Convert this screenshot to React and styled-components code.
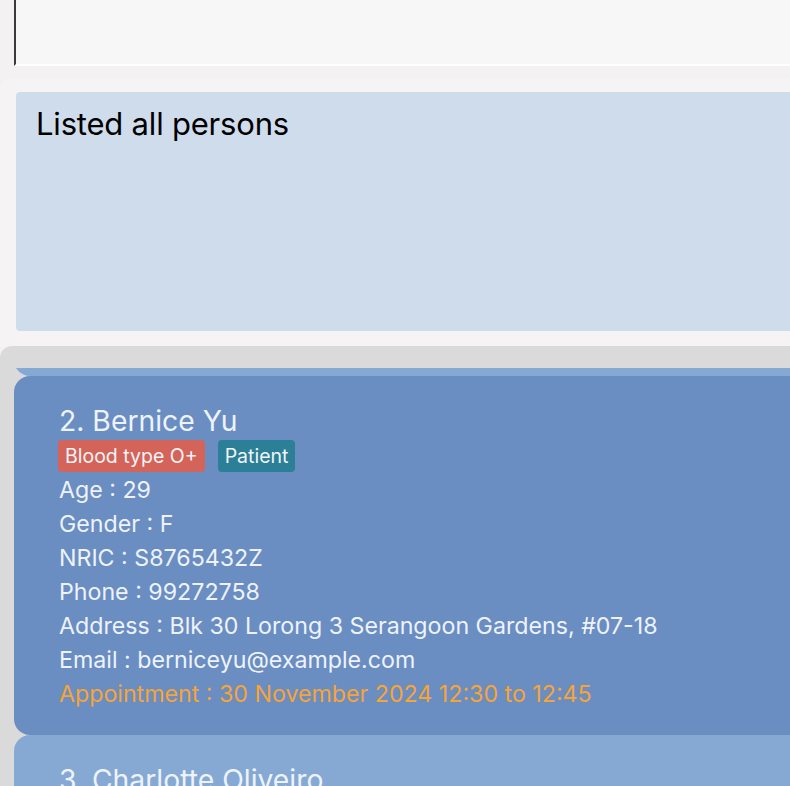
import React from "react";
import styled, { createGlobalStyle } from "styled-components";

const Global = createGlobalStyle`
  html, body { margin: 0; padding: 0; overflow: hidden; background: #f3f1f1; }
  body { font-family: Inter, "Noto Sans", sans-serif; }
  * { box-sizing: border-box; }
`;

const Page = styled.div`
  width: 860px;
  height: 786px;
  display: flex;
  flex-direction: column;
  background: #f3f1f1;
`;

const CommandBox = styled.div`
  margin-left: 14px;
  height: 66px;
  background: #f7f7f7;
  border-left: 2px solid #3a3a3a;
  border-bottom: 2px solid #ffffff;
`;

const ResultPane = styled.div`
  margin-top: 12px;
  padding: 14px 0 15px 16px;
  background: #f5f3f3;
  border-top-left-radius: 10px;
`;

const ResultBox = styled.div`
  height: 239px;
  background: #cfdcec;
  border-radius: 4px;
  padding: 13px 20px;
  font-size: 31px;
  line-height: 38px;
  color: #000;
  letter-spacing: -0.2px;
`;

const ListPane = styled.div`
  flex: 1;
  min-height: 0;
  background: #dadada;
  border-top-left-radius: 12px;
  padding: 22px 0 0 14px;
  display: flex;
  flex-direction: column;
  overflow: hidden;
`;

const Clip = styled.div`
  height: 8px;
  overflow: hidden;
  display: flex;
  flex-direction: column;
  justify-content: flex-end;
  flex-shrink: 0;
`;

const Card = styled.div`
  flex-shrink: 0;
  background: ${(p) => (p.$active ? "#6a8dc2" : "#85a9d3")};
  border-radius: 16px;
  padding: 28px 0 24px 45px;
  height: ${(p) => p.$h || "auto"};
  color: #eef3fb;
`;

const Name = styled.div`
  font-size: 28.3px;
  line-height: 34px;
  margin-bottom: 2px;
`;

const Tags = styled.div`
  display: flex;
  gap: 13px;
  margin: 0 0 1px -1px;
`;

const Tag = styled.span`
  background: ${(p) => p.$bg};
  color: #f2f4f8;
  font-size: 19.5px;
  line-height: 32px;
  height: 32px;
  padding: 0 7px;
  border-radius: 4px;
`;

const Field = styled.div`
  font-size: 23.2px;
  line-height: 34px;
  color: ${(p) => (p.$accent ? "#f7a436" : "#eef3fb")};
`;

export default function App() {
  return (
    <>
      <Global />
      <Page>
        <CommandBox />
        <ResultPane>
          <ResultBox>Listed all persons</ResultBox>
        </ResultPane>
        <ListPane>
          <Clip>
            <Card $h="40px" />
          </Clip>
          <Card $active>
            <Name>2. Bernice Yu</Name>
            <Tags>
              <Tag $bg="#d4645a">Blood type O+</Tag>
              <Tag $bg="#2b7f96">Patient</Tag>
            </Tags>
            <Field>Age : 29</Field>
            <Field>Gender : F</Field>
            <Field>NRIC : S8765432Z</Field>
            <Field>Phone : 99272758</Field>
            <Field>Address : Blk 30 Lorong 3 Serangoon Gardens, #07-18</Field>
            <Field>Email : berniceyu@example.com</Field>
            <Field $accent>Appointment : 30 November 2024 12:30 to 12:45</Field>
          </Card>
          <Card>
            <Name>3. Charlotte Oliveiro</Name>
          </Card>
        </ListPane>
      </Page>
    </>
  );
}
